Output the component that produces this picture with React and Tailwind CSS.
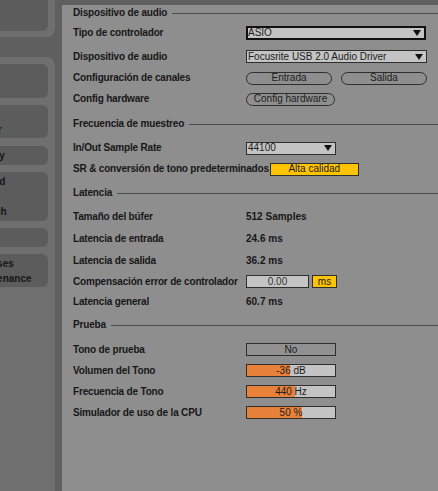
import React from 'react'

const Arrow = () => (
  <svg width="8" height="6" viewBox="0 0 8 6" className="shrink-0">
    <path d="M0 0 L8 0 L4 6 Z" fill="#111" />
  </svg>
)

function Select({ value, className }) {
  return (
    <div className={`h-[13px] bg-[#c4c4c4] flex items-center justify-between pr-[3px] text-[10px] leading-none text-[#1c1c1c] ${className}`}>
      <span>{value}</span>
      <Arrow />
    </div>
  )
}

function Pill({ children, className }) {
  return (
    <div className={`h-[13px] rounded-full border border-[#2e2e2e] flex items-center justify-center text-[10px] leading-none text-[#1c1c1c] ${className}`}>
      {children}
    </div>
  )
}

function Slider({ value, fill }) {
  return (
    <div className="relative h-[13px] w-[90px] border border-[#2e2e2e] bg-[#c4c4c4] overflow-hidden">
      <div className="absolute left-0 top-0 bottom-0 bg-[#e8823a]" style={{ width: fill }} />
      <div className="relative h-full flex items-center justify-center text-[10px] leading-none text-[#1c1c1c]">{value}</div>
    </div>
  )
}

function Header({ label, h }) {
  return (
    <div className={`flex items-center ${h}`}>
      <span className="font-bold tracking-[-0.18px]">{label}</span>
      <div className="flex-1 h-px bg-[#4c4c4c] ml-[5px]" />
    </div>
  )
}

function Row({ label, h, children }) {
  return (
    <div className={`flex items-center ${h}`}>
      <span className="w-[173px] shrink-0 font-bold tracking-[-0.18px] whitespace-nowrap">{label}</span>
      {children}
    </div>
  )
}

function Tab({ lines, className }) {
  return (
    <div className={`w-[48px] bg-[#5c5c5c] rounded-r-[6px] overflow-hidden flex flex-col justify-center ${className}`}>
      <div className="ml-[-29px] whitespace-nowrap font-bold text-[10px] leading-[15px] text-[#161616]">
        {lines.map((l) => (
          <div key={l}>{l}</div>
        ))}
      </div>
    </div>
  )
}

export default function App() {
  return (
    <div className="w-[438px] h-[491px] flex bg-[#5f5f5f] overflow-hidden font-['Liberation_Sans',Arial,sans-serif]">
      <div className="w-[55px] shrink-0 flex flex-col">
        <div className="h-[37px] bg-[#6f6f6f] rounded-br-[8px] pb-[6px]">
          <Tab lines={['Look', 'Feel']} className="h-[31px] rounded-tr-none" />
        </div>
        <div className="mt-[20px] flex-1 bg-[#6f6f6f] rounded-tr-[8px] pt-[7px] flex flex-col gap-[7px]">
          <Tab lines={['Link', 'MIDI']} className="h-[34px]" />
          <Tab lines={['File', 'Folder']} className="h-[33px]" />
          <Tab lines={['Library']} className="h-[19px] mt-[1px]" />
          <Tab lines={['Record', 'Warp', 'Launch']} className="h-[49px]" />
          <Tab lines={['CPU']} className="h-[19px]" />
          <Tab lines={['Licenses', 'Maintenance']} className="h-[33px]" />
        </div>
      </div>
      <div className="ml-[7px] mt-[5px] flex-1 bg-[#8e8e8e] pl-[11px] text-[10px] text-[#171717] leading-none">
        <Header label="Dispositivo de audio" h="h-[16px]" />
        <Row label="Tipo de controlador" h="h-[24px]">
          <Select value="ASIO" className="w-[180px] h-[14px] border-2 border-[#111]" />
        </Row>
        <Row label="Dispositivo de audio" h="h-[23px]">
          <Select value="Focusrite USB 2.0 Audio Driver" className="w-[181px] border border-[#2e2e2e] pl-px" />
        </Row>
        <Row label="Configuración de canales" h="h-[20px]">
          <div className="flex gap-[9px]">
            <Pill className="w-[86px]">Entrada</Pill>
            <Pill className="w-[86px]">Salida</Pill>
          </div>
        </Row>
        <Row label="Config hardware" h="h-[22px]">
          <Pill className="w-[89px]">Config hardware</Pill>
        </Row>
        <Header label="Frecuencia de muestreo" h="h-[28px]" />
        <Row label="In/Out Sample Rate" h="h-[20px]">
          <Select value="44100" className="w-[90px] border border-[#2e2e2e] pl-px" />
        </Row>
        <div className="flex items-center h-[22px]">
          <span className="font-bold tracking-[-0.18px] whitespace-nowrap">SR &amp; conversión de tono predeterminados</span>
          <div className="ml-[1px] w-[89px] h-[13px] shrink-0 border border-[#2e2e2e] bg-[#ffc300] flex items-center justify-center text-[10px] text-[#1c1c1c]">
            Alta calidad
          </div>
        </div>
        <Header label="Latencia" h="h-[26px]" />
        <Row label="Tamaño del búfer" h="h-[21px]">
          <span className="font-bold">512 Samples</span>
        </Row>
        <Row label="Latencia de entrada" h="h-[23px]">
          <span className="font-bold">24.6 ms</span>
        </Row>
        <Row label="Latencia de salida" h="h-[21px]">
          <span className="font-bold">36.2 ms</span>
        </Row>
        <Row label="Compensación error de controlador" h="h-[21px]">
          <div className="flex gap-[3px]">
            <div className="w-[63px] h-[13px] border border-[#2e2e2e] bg-[#c4c4c4] flex items-center justify-center text-[#333]">0.00</div>
            <div className="w-[25px] h-[13px] border border-[#2e2e2e] bg-[#ffc300] flex items-center justify-center text-[#1c1c1c]">ms</div>
          </div>
        </Row>
        <Row label="Latencia general" h="h-[19px]">
          <span className="font-bold">60.7 ms</span>
        </Row>
        <Header label="Prueba" h="h-[28px]" />
        <Row label="Tono de prueba" h="h-[21px]">
          <div className="w-[90px] h-[13px] border border-[#2e2e2e] bg-[#919191] flex items-center justify-center text-[#1c1c1c]">No</div>
        </Row>
        <Row label="Volumen del Tono" h="h-[21px]">
          <Slider value="-36 dB" fill={43} />
        </Row>
        <Row label="Frecuencia de Tono" h="h-[21px]">
          <Slider value="440 Hz" fill={48} />
        </Row>
        <Row label="Simulador de uso de la CPU" h="h-[21px]">
          <Slider value="50 %" fill={55} />
        </Row>
      </div>
    </div>
  )
}
